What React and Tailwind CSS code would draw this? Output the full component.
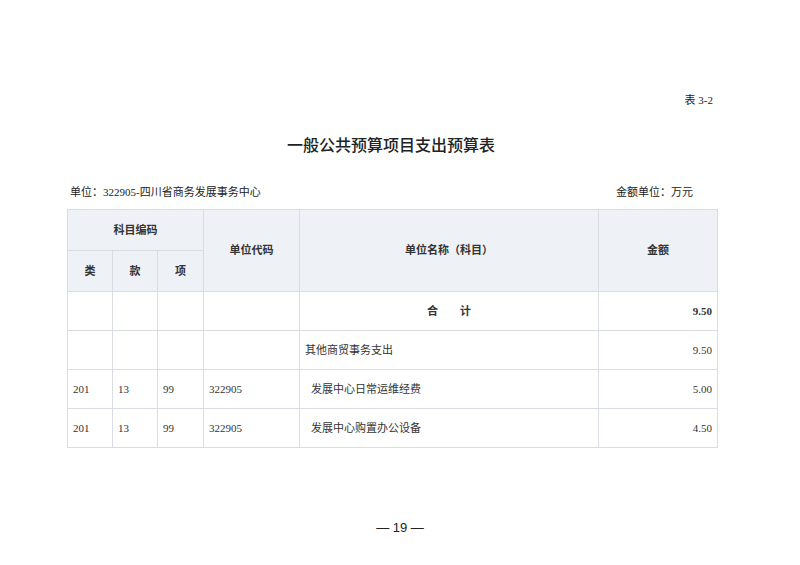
import React from 'react';

const rows = [
    { lei: '', kuan: '', xiang: '', code: '', name: '合　　计', amount: '9.50', total: true },
    { lei: '', kuan: '', xiang: '', code: '', name: '其他商贸事务支出', amount: '9.50' },
    { lei: '201', kuan: '13', xiang: '99', code: '322905', name: '发展中心日常运维经费', amount: '5.00', indent: true },
    { lei: '201', kuan: '13', xiang: '99', code: '322905', name: '发展中心购置办公设备', amount: '4.50', indent: true },
];

const cell = "border border-[#d9dde3] px-[5px] text-[11px] text-[#333]";

const App = () => {
    return (
        <div className="w-[800px] h-[565px] bg-white font-['Liberation_Serif','Noto_Sans_CJK_SC',serif] text-[#222] flex flex-col">
            <div className="pl-[67px] w-[717px] pt-[92px] flex flex-col">
                <div className="text-right text-[11px] leading-[16px] pr-[4px]">表 3-2</div>

                <h1 className="text-center text-[16px] leading-[22px] font-medium mt-[25px] pr-[2px] font-['Noto_Sans_CJK_SC',sans-serif]">一般公共预算项目支出预算表</h1>

                <div className="flex justify-between text-[11px] leading-[16px] mt-[29px] px-[3px] pr-[24px]">
                    <span>单位：322905-四川省商务发展事务中心</span>
                    <span>金额单位：万元</span>
                </div>

                <table className="mt-[9px] w-[650px] border-collapse table-fixed">
                    <colgroup>
                        <col className="w-[45px]" />
                        <col className="w-[45px]" />
                        <col className="w-[46px]" />
                        <col className="w-[96px]" />
                        <col className="w-[299px]" />
                        <col className="w-[119px]" />
                    </colgroup>
                    <thead>
                        <tr className="h-[41px] bg-[#eef1f5]">
                            <th colSpan={3} className={`${cell} font-bold text-center`}>科目编码</th>
                            <th rowSpan={2} className={`${cell} font-bold text-center`}>单位代码</th>
                            <th rowSpan={2} className={`${cell} font-bold text-center`}>单位名称（科目）</th>
                            <th rowSpan={2} className={`${cell} font-bold text-center`}>金额</th>
                        </tr>
                        <tr className="h-[41px] bg-[#eef1f5]">
                            <th className={`${cell} font-bold text-center`}>类</th>
                            <th className={`${cell} font-bold text-center`}>款</th>
                            <th className={`${cell} font-bold text-center`}>项</th>
                        </tr>
                    </thead>
                    <tbody>
                        {rows.map((r, i) => (
                            <tr key={i} className="h-[39px]">
                                <td className={cell}>{r.lei}</td>
                                <td className={cell}>{r.kuan}</td>
                                <td className={cell}>{r.xiang}</td>
                                <td className={cell}>{r.code}</td>
                                <td className={`${cell} ${r.total ? 'text-center font-bold' : 'text-left'} ${r.indent ? 'pl-[11px]' : ''}`}>{r.name}</td>
                                <td className={`${cell} text-right ${r.total ? 'font-bold' : ''}`}>{r.amount}</td>
                            </tr>
                        ))}
                    </tbody>
                </table>
            </div>

            <div className="mt-auto mb-[28px] text-center text-[13px] leading-[18px] font-['Liberation_Sans',sans-serif] text-[#222]">— 19 —</div>
        </div>
    );
};

export default App;
